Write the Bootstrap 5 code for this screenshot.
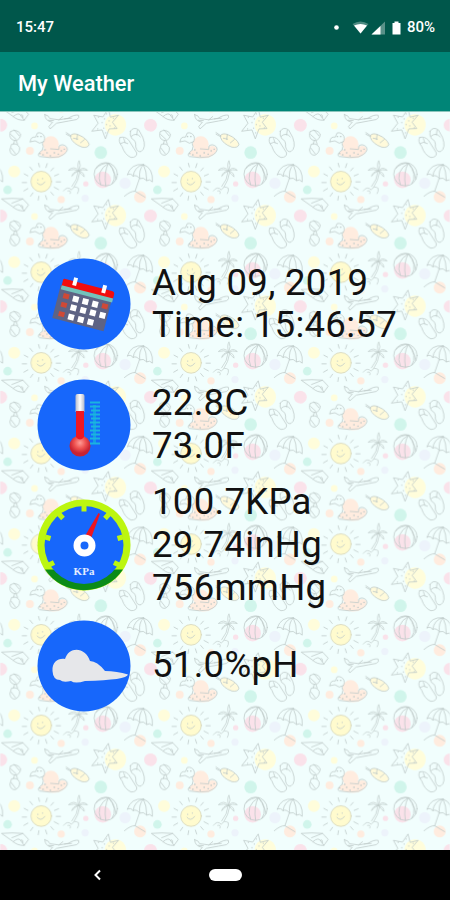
<!DOCTYPE html>
<html lang="en">
<head>
<meta charset="utf-8">
<meta name="viewport" content="width=device-width, initial-scale=1">
<title>My Weather</title>
<link href="https://cdn.jsdelivr.net/npm/bootstrap@5.3.0/dist/css/bootstrap.min.css" rel="stylesheet">
<style>
body{font-family:Roboto,"Liberation Sans",sans-serif;background:#000}
.screen{width:450px;height:900px}
.status{height:52px;background:#00574b;padding:3px 15px 0 16px;font-size:15px;font-weight:500}
.appbar{height:59px;background:#008577;padding:4px 18px 0}
.apptitle{font-size:21.8px;font-weight:500;line-height:1}
.readings{height:739px;background:#f1fefd;padding:133px 0 0 37px}
.backdrop{inset:0;z-index:0;border-top:1px solid #8cc5bc}
.reading{height:120.5px;gap:21px;z-index:1}
.readout{font-size:36.6px;line-height:42.7px;color:#111;letter-spacing:.27px}
.softnav{height:50px;background:#000}
.back{left:92px;top:18px}
.home{left:209px;top:19px;width:33px;height:12px;background:#fff}
</style>
<script src="https://cdn.jsdelivr.net/npm/bootstrap@5.3.0/dist/js/bootstrap.bundle.min.js"></script>
</head>
<body>
<div class="screen d-flex flex-column overflow-hidden">
  <header class="status d-flex align-items-center justify-content-between text-white">
    <span>15:47</span>
    <span class="d-flex align-items-center">
      <svg width="70" height="20" viewBox="0 0 70 20">
        <circle cx="3.500" cy="9.500" r="2.300" fill="#fff"/>
        <path d="M19.500 6Q27.500 1 35.500 6L27.500 15.500Z" fill="#fff" opacity=".3"/>
        <path d="M21 7.500Q27.500 4.500 34 7.500L27.500 15.500Z" fill="#fff"/>
        <path d="M38.500 16.500L52 3.500V16.500Z" fill="#fff" opacity=".35"/>
        <path d="M38.500 16.500L47.500 8V16.500Z" fill="#fff"/>
        <path d="M59.500 5h2V3.500h4V5h2v11.500h-8Z" fill="#fff"/>
      </svg>
      <span class="ms-1">80%</span>
    </span>
  </header>
  <nav class="appbar d-flex align-items-center text-white"><h1 class="apptitle m-0">My Weather</h1></nav>
  <main class="readings position-relative">
    <svg class="backdrop position-absolute" width="450" height="739" viewBox="0 111 450 739">
      <defs>
        <g id="beach" fill="none" stroke="#bcc8c7" stroke-width="2.300" stroke-linecap="round" stroke-linejoin="round">
          <g stroke="none">
            <g fill="#fffddb"><circle cx="42" cy="182" r="18"/><circle cx="346" cy="314" r="32"/><circle cx="103" cy="317" r="10"/></g>
            <g fill="#fae2ea"><circle cx="451" cy="315" r="19"/><circle cx="1" cy="315" r="19"/><circle cx="257" cy="219" r="8"/><circle cx="308" cy="207" r="25"/></g>
            <g fill="#d0f5eb"><circle cx="302" cy="397" r="19"/><circle cx="22" cy="237" r="13"/></g>
            <g fill="#ffecdf"><circle cx="420" cy="258" r="18"/><circle cx="183" cy="266" r="11"/><circle cx="89" cy="392" r="12"/><circle cx="152" cy="372" r="24"/><path d="M115 402Q130 380 165 385Q190 370 200 384Q203 402 175 413Q140 418 115 402Z"/></g>
            <g fill="#edf3fb"><circle cx="375" cy="217" r="17"/><circle cx="255" cy="262" r="11"/></g>
          </g>
          <circle cx="123" cy="212" r="31" fill="#fffbce" stroke="#d3d2b8"/>
          <path d="M111 216Q122 230 134 213M113 206v2M127 202v2M118 168l-3-11M137 170l4-12M152 180l8-9M163 195l12-5M168 213h13M162 229l13 7M152 244l8 9M136 254l4 12M116 256l-2 12M98 246l-7 10M83 233l-12 7M79 215H66M83 195l-11-6M97 178l-8-10"/>
          <path stroke-width="2" d="M236 180Q222 162 205 178Q222 173 236 180Q218 182 215 196Q225 184 236 180Q230 160 237 149Q244 163 236 180Q247 165 262 178Q247 174 236 180Q253 185 252 198Q243 190 236 180ZM234 183Q232 207 215 227M239 184Q235 210 222 228M190 240Q202 224 214 237Q222 223 235 232Q237 240 232 248M203 240Q214 237 210 248"/>
          <circle cx="317" cy="190" r="35"/>
          <path d="M325 157Q285 180 302 222M325 157Q355 190 336 219M325 157Q310 185 317 225M325 157Q340 165 348 205M288 172Q305 155 325 157"/>
          <path d="M382 191Q393 157 430 161Q460 172 457 213Q449 203 440 209Q430 198 419 203Q408 190 399 196Q393 186 382 191ZM430 161Q403 166 399 196M430 161Q415 177 419 203M430 161Q440 180 440 209M418 203L405 241M373 256Q392 240 405 241L435 259"/>
          <path d="M5 264Q36 261 68 264L85 282L72 300Q52 301 39 289ZM35 277L68 264M39 289Q55 275 61 285Q68 280 68 292M72 300L61 285"/>
          <path d="M134 283Q146 285 149 295Q177 303 204 294Q224 282 235 285Q240 293 229 298Q207 302 180 307L169 309L150 326L146 319L157 306Q133 302 134 283ZM176 299l12-10M193 296l21-2M145 300l15 1"/>
          <path d="M325 267L331 291L355 285L337 306L351 325L327 326L316 356L306 329L275 333L294 309L281 285L307 290Z"/>
          <path d="M319 280v2M313 295v2M327 301v2M306 306v2M319 312v2M330 316v2M311 323v2M295 290v2M340 293v2M293 325v2M317 337v2M343 322v2"/>
          <path d="M31 334Q48 324 61 341Q61 358 46 361Q30 360 29 347ZM35 372Q50 367 58 382Q60 398 45 405Q31 406 29 390ZM43 361l-3 11M48 361l4 11M32 343l15 14M42 329l15 18M33 384l13 17"/>
          <path d="M90 365Q91 348 106 351L112 338Q126 336 132 348Q136 362 126 369Q132 378 127 389M90 365l15-3l13 7l13-5M127 389Q107 404 118 409Q150 415 176 410Q208 397 200 381Q189 369 177 377L176 388L151 386"/>
          <path d="M112 349h1M122 349h1M128 404h1M140 398h1M150 407h1M162 398h1M174 402h1M183 392h1M192 387h1M134 389h1M119 400h1" stroke-width="4"/>
          <path d="M212 345Q220 337 235 344Q260 354 267 372Q265 384 246 381Q218 371 212 353ZM198 337l15 10M198 342l13 7M220 354l13 3M232 343l-2 15M253 358l-12 10" fill="#fffadb"/>
          <path d="M360 352Q374 347 386 360L410 398Q411 412 393 412Q374 404 366 379Q352 362 360 352ZM391 333Q400 318 416 329L428 351Q440 383 423 394Q411 397 407 380Q409 361 395 355Q388 345 391 333ZM361 370Q371 362 383 370M394 348Q409 335 421 350M371 355l4 12M412 330l-2 14"/>
        </g>
        <pattern id="tile" width="450" height="272.300" patternUnits="userSpaceOnUse" patternTransform="translate(0 110) scale(.333333)">
          <use href="#beach"/><use href="#beach" x="-450"/>
          <use href="#beach" y="-272.300"/><use href="#beach" x="-450" y="-272.300"/>
        </pattern>
      </defs>
      <rect y="111" width="450" height="739" fill="url(#tile)"/>
    </svg>

    <section class="reading position-relative d-flex align-items-center">
      <svg width="94" height="92" viewBox="0 0 94 92" class="flex-shrink-0">
        <ellipse cx="47" cy="46" rx="46.500" ry="45.500" fill="#1767fb"/>
        <g transform="translate(26.500 20.500) rotate(14.500)">
          <path d="M-1 7H52V41H-1Z" fill="#5e6384"/>
          <path d="M0 1Q0 0 2 0H50Q53 0 53 3V8H0Z" fill="#f20d0d"/>
          <path d="M0 7H53V11H0Z" fill="#73c2bb"/>
          <g fill="#fff"><path d="M10-4h4v8h-4ZM40-4h4v8h-4Z"/><path d="M14 14h6v6h-6ZM24 14h6v6h-6ZM34 14h6v6h-6ZM14 23h6v6h-6ZM24 23h6v6h-6ZM34 23h6v6h-6ZM44 23h6v6h-6ZM14 32.500h6v6h-6ZM24 32.500h6v6h-6ZM34 32.500h6v6h-6Z"/></g>
          <path d="M4 14h6v5h-6ZM4 23h6v5h-6ZM4 32.500h6v5h-6ZM44 14h6v5h-6Z" fill="#cf4936"/>
        </g>
      </svg>
      <div class="readout text-nowrap"><div>Aug 09, 2019</div><div>Time: 15:46:57</div></div>
    </section>

    <section class="reading position-relative d-flex align-items-center">
      <svg width="94" height="92" viewBox="0 0 94 92" class="flex-shrink-0">
        <defs>
          <linearGradient id="glass"><stop stop-color="#b8bccb"/><stop offset=".5" stop-color="#fff"/><stop offset="1" stop-color="#b5b9c9"/></linearGradient>
          <radialGradient id="bulb" cx=".5" cy=".35"><stop stop-color="#ff9c96"/><stop offset=".55" stop-color="#ee514f"/><stop offset="1" stop-color="#c72333"/></radialGradient>
        </defs>
        <ellipse cx="47" cy="46" rx="46.500" ry="45.500" fill="#1767fb"/>
        <path d="M38.500 17Q38.500 15 40.500 15H45.500Q47.500 15 47.500 17V33H38.500Z" fill="url(#glass)"/>
        <circle cx="43" cy="67" r="10.500" fill="url(#bulb)"/>
        <path d="M39 32h8v26q-4 5-8 0Z" fill="#ee1722"/>
        <path d="M56 26h3v39h-3Z" fill="#159ce5"/>
        <path d="M53 23.500H63M53 27.500H63M54 31.500H63M53 35.500H63M54 39.500H63M53 43.500H63M54 47.500H63M53 51.500H63M54 55.500H63M53 59.500H63M53 64.500H63" stroke="#1bb4df" stroke-width="1.800"/>
      </svg>
      <div class="readout text-nowrap"><div>22.8C</div><div>73.0F</div></div>
    </section>

    <section class="reading position-relative d-flex align-items-center">
      <svg width="94" height="92" viewBox="0 0 94 92" class="flex-shrink-0">
        <ellipse cx="47" cy="46" rx="46.500" ry="45.500" fill="#bcf610"/>
        <path d="M8 70.500A46.500 45.500 0 0 0 86 70.500Z" fill="#0b8b19"/>
        <ellipse cx="47" cy="46" rx="39.500" ry="39" fill="#1767fb"/>
        <path d="M47 6V12.500M22 15L26 19.500M72 15L68 19.500M8 38L13.500 39.500M86 38L80.500 39.500M10 67L17 63.500M84 67L77 63.500" stroke="#bcf610" stroke-width="5"/>
        <path d="M61.500 14L63 15L54.500 38L48 37Z" fill="#ed1520"/>
        <circle cx="47.500" cy="46.500" r="7.500" fill="none" stroke="#fff" stroke-width="7"/>
        <text x="47" y="76" text-anchor="middle" font-family="Liberation Serif, serif" font-weight="700" font-size="11" fill="#e4edff">KPa</text>
      </svg>
      <div class="readout text-nowrap"><div>100.7KPa</div><div>29.74inHg</div><div>756mmHg</div></div>
    </section>

    <section class="reading position-relative d-flex align-items-center">
      <svg width="94" height="92" viewBox="0 0 94 92" class="flex-shrink-0">
        <ellipse cx="47" cy="46" rx="46.500" ry="45.500" fill="#1767fb"/>
        <path d="M15.500 51C15 42 21 38 28 39C32 25.500 49 27 53 41Q60 41 68 51Q80 51 91 54.500Q90 60 48 61Q38 64 34 61Q26 63 23 60Q16 60 15.500 51Z" fill="#e6e7ea"/>
      </svg>
      <div class="readout text-nowrap">51.0%pH</div>
    </section>
  </main>
  <footer class="softnav position-relative">
    <svg class="back position-absolute" width="12" height="14" viewBox="0 0 12 14"><path d="M8 2.500L3.500 7L8 11.500" fill="none" stroke="#fff" stroke-width="2"/></svg>
    <span class="home position-absolute rounded-pill"></span>
  </footer>
</div>
</body>
</html>
